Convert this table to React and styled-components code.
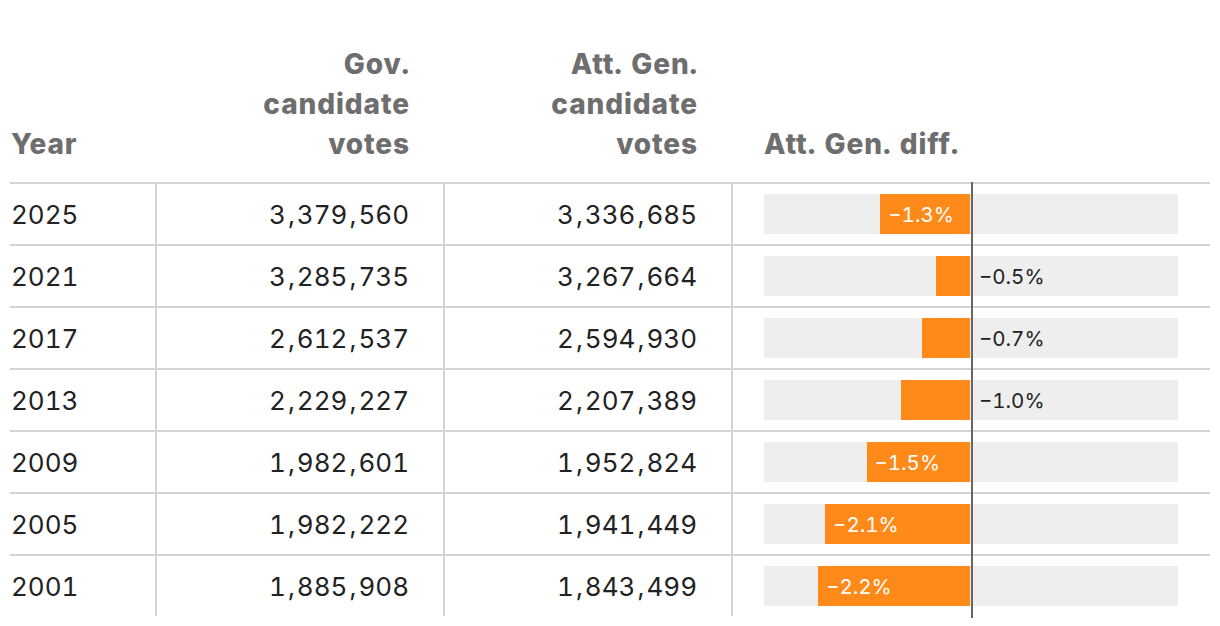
import styled, { createGlobalStyle } from 'styled-components'

const GlobalStyle = createGlobalStyle`
    body {
        margin: 0;
        background: #fff;
        font-family: Inter, "Noto Sans", sans-serif;
    }
`

const rows = [
    { year: 2025, gov: '3,379,560', ag: '3,336,685', diff: -1.3 },
    { year: 2021, gov: '3,285,735', ag: '3,267,664', diff: -0.5 },
    { year: 2017, gov: '2,612,537', ag: '2,594,930', diff: -0.7 },
    { year: 2013, gov: '2,229,227', ag: '2,207,389', diff: -1.0 },
    { year: 2009, gov: '1,982,601', ag: '1,952,824', diff: -1.5 },
    { year: 2005, gov: '1,982,222', ag: '1,941,449', diff: -2.1 },
    { year: 2001, gov: '1,885,908', ag: '1,843,499', diff: -2.2 },
]

const MAX = 3

const Wrapper = styled.div`
    padding: 44px 10px 10px;
`

const Table = styled.table`
    width: 1200px;
    border-collapse: collapse;
    table-layout: fixed;
    font-variant-numeric: tabular-nums;
`

const Th = styled.th`
    font-size: 28px;
    line-height: 40px;
    font-weight: 800;
    letter-spacing: 0.9px;
    color: #6e6e6e;
    vertical-align: bottom;
    text-align: ${p => p.$align || 'left'};
    padding: 0 ${p => p.$align === 'right' ? '34px' : '0'} 18px ${p => p.$pl || '0'};
    border-bottom: 2px solid #d4d4d4;
`

const Td = styled.td`
    font-size: 26px;
    color: #222;
    height: 60px;
    padding: 0 ${p => p.$align === 'right' ? '34px' : '0'} 0 ${p => p.$pl || '0'};
    text-align: ${p => p.$align || 'left'};
    vertical-align: middle;
    border-bottom: 2px solid #d4d4d4;
    border-right: 2px solid #d4d4d4;
    tr:last-child & {
        border-bottom: none;
    }
`

const Comma = styled.span`
    margin: 0 2px;
`

const BarCell = styled.td`
    padding: 0 32px 0 31px;
    height: 60px;
    vertical-align: middle;
    border-bottom: 2px solid #d4d4d4;
    tr:last-child & {
        border-bottom: none;
    }
`

const Track = styled.div`
    position: relative;
    height: 40px;
    background: #eeeeee;
    &::after {
        content: '';
        position: absolute;
        left: 50%;
        top: -12px;
        bottom: -12px;
        width: 2px;
        background: #666;
    }
`

const Bar = styled.div`
    position: absolute;
    top: 0;
    bottom: 0;
    right: calc(50% + 1px);
    background: #ff8a1a;
    display: flex;
    align-items: center;
`

const Label = styled.span`
    font-size: 20.5px;
    color: ${p => p.$inside ? '#fff' : '#222'};
    padding-left: 8px;
    white-space: nowrap;
`

const OutLabel = styled(Label)`
    position: absolute;
    top: 0;
    bottom: 0;
    left: calc(50% + 2px);
    display: flex;
    align-items: center;
    padding-left: 6px;
`

const fmt = v => '\u2212' + Math.abs(v).toFixed(1) + '%'

const Num = ({ value }) => {
    const parts = value.split(',')
    return parts.map((p, i) => (
        <span key={i}>{p}{i < parts.length - 1 && <Comma>,</Comma>}</span>
    ))
}

const DiffBar = ({ value }) => {
    const width = (Math.abs(value) / MAX) * 207
    const inside = width > 80
    return (
        <Track>
            <Bar style={{ width: width + 'px' }}>
                {inside && <Label $inside>{fmt(value)}</Label>}
            </Bar>
            {!inside && <OutLabel>{fmt(value)}</OutLabel>}
        </Track>
    )
}

export default function App() {
    return (
        <Wrapper>
            <GlobalStyle />
            <Table>
                <colgroup>
                    <col style={{ width: '146px' }} />
                    <col style={{ width: '288px' }} />
                    <col style={{ width: '288px' }} />
                    <col />
                </colgroup>
                <thead>
                    <tr>
                        <Th $pl="1px">Year</Th>
                        <Th $align="right">Gov.<br />candidate<br />votes</Th>
                        <Th $align="right">Att. Gen.<br />candidate<br />votes</Th>
                        <Th $pl="32px">Att. Gen. diff.</Th>
                    </tr>
                </thead>
                <tbody>
                    {rows.map(r => (
                        <tr key={r.year}>
                            <Td $pl="1px">{r.year}</Td>
                            <Td $align="right"><Num value={r.gov} /></Td>
                            <Td $align="right"><Num value={r.ag} /></Td>
                            <BarCell>
                                <DiffBar value={r.diff} />
                            </BarCell>
                        </tr>
                    ))}
                </tbody>
            </Table>
        </Wrapper>
    )
}
